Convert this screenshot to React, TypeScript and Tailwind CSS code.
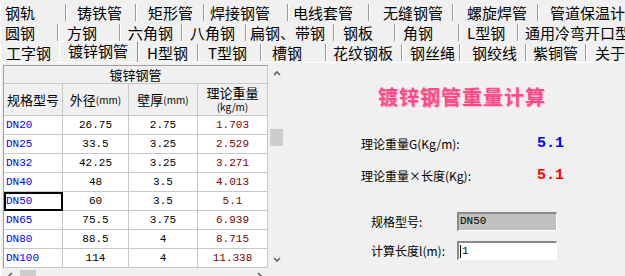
import React from 'react';

type Tab = { t: string; c: string; sel?: boolean; last?: boolean };

const row1: Tab[] = [
  { t: '钢轨', c: 'w-[66px] pl-[4px]' },
  { t: '铸铁管', c: 'w-[70px] pl-[10px]' },
  { t: '矩形管', c: 'w-[68px] pl-[11px]' },
  { t: '焊接钢管', c: 'w-[84px] pl-[5px]' },
  { t: '电线套管', c: 'w-[81px] pl-[4px]' },
  { t: '无缝钢管', c: 'w-[84px] pl-[13px]' },
  { t: '螺旋焊管', c: 'w-[85px] pl-[13px]' },
  { t: '管道保温计算', c: 'w-[120px] pl-[11px]' },
];

const row2: Tab[] = [
  { t: '圆钢', c: 'w-[58px] pl-[4px]' },
  { t: '方钢', c: 'w-[62px] pl-[8px]' },
  { t: '六角钢', c: 'w-[62px] pl-[7px]' },
  { t: '八角钢', c: 'w-[64px] pl-[7px]' },
  { t: '扁钢、带钢', c: 'w-[88px] pl-[3px]' },
  { t: '钢板', c: 'w-[61px] pl-[8px]' },
  { t: '角钢', c: 'w-[64px] pl-[7px]' },
  { t: 'L型钢', c: 'w-[59px] pl-[7px]' },
  { t: '通用冷弯开口型钢', c: 'w-[140px] pl-[6px]' },
];

const row3: Tab[] = [
  { t: '工字钢', c: 'w-[59px] pl-[5px]', last: true },
  { t: '镀锌钢管', c: 'w-[79px] pl-[8px]', sel: true },
  { t: 'H型钢', c: 'w-[60px] pl-[8px]' },
  { t: 'T型钢', c: 'w-[63px] pl-[9px]' },
  { t: '槽钢', c: 'w-[65px] pl-[10px]' },
  { t: '花纹钢板', c: 'w-[76px] pl-[6px]' },
  { t: '钢丝绳', c: 'w-[58px] pl-[7px]' },
  { t: '钢绞线', c: 'w-[66px] pl-[11px]' },
  { t: '紫铜管', c: 'w-[60px] pl-[6px]' },
  { t: '关于', c: 'w-[60px] pl-[8px]' },
];

const pipes = [
  ['DN20', '26.75', '2.75', '1.703'],
  ['DN25', '33.5', '3.25', '2.529'],
  ['DN32', '42.25', '3.25', '3.271'],
  ['DN40', '48', '3.5', '4.013'],
  ['DN50', '60', '3.5', '5.1'],
  ['DN65', '75.5', '3.75', '6.939'],
  ['DN80', '88.5', '4', '8.715'],
  ['DN100', '114', '4', '11.338'],
];

const TabRow = ({ tabs }: { tabs: Tab[] }) => (
  <div className="flex h-[20px] items-center whitespace-nowrap">
    {tabs.map((tab) =>
      tab.sel ? (
        <div
          key={tab.t}
          className={`relative z-10 -mb-px flex-none self-end h-[22px] bg-[#f0f0f0] border-t border-l border-r border-white border-r-[#8c8c8c] leading-[18px] ${tab.c}`}
        >
          {tab.t}
        </div>
      ) : (
        <div
          key={tab.t}
          className={`flex-none h-[17px] leading-[17px] border-l border-white ${
            tab.last ? '' : 'border-r border-r-[#9a9a9a]'
          } ${tab.c}`}
        >
          {tab.t}
        </div>
      )
    )}
  </div>
);

const Arrow = ({ dir }: { dir: 'up' | 'down' | 'left' | 'right' }) => {
  const pts = {
    up: '1,5 4,2 7,5',
    down: '1,2 4,5 7,2',
    left: '5,1 2,4 5,7',
    right: '2,1 5,4 2,7',
  }[dir];
  return (
    <svg width="8" height="8" viewBox="0 0 8 8">
      <polyline points={pts} fill="none" stroke="#606060" strokeWidth="1.6" />
    </svg>
  );
};

const mono = "font-['Liberation_Mono','Noto_Sans_CJK_SC',monospace]";

export default function App() {
  return (
    <div className="w-[625px] h-[276px] overflow-hidden bg-[#f0f0f0] text-black font-['Noto_Sans_CJK_SC',sans-serif]">
      {/* tab strip */}
      <div className="pt-[2px] text-[15px] overflow-hidden">
        <TabRow tabs={row1} />
        <TabRow tabs={row2} />
        <TabRow tabs={row3} />
      </div>

      {/* tab page */}
      <div className="flex h-[214px] border-t border-l border-white">
        {/* table + scrollbars */}
        <div className="flex flex-col pl-[2px] pt-[2px]">
          <div className="flex">
            <div className="w-[265px] border-t border-l border-[#a0a0a0] text-[13px]">
              <div className="h-[18px] leading-[17px] text-center border-r border-b border-[#c8c8c8]">
                镀锌钢管
              </div>
              <div className="grid grid-cols-[59px_66px_69px_70px] h-[32px]">
                <div className="flex items-center pl-[3px] border-r border-b border-[#c8c8c8]">规格型号</div>
                <div className="flex items-center justify-center border-r border-b border-[#c8c8c8]">
                  外径<span className="text-[10px]">(mm)</span>
                </div>
                <div className="flex items-center justify-center border-r border-b border-[#c8c8c8]">
                  壁厚<span className="text-[10px]">(mm)</span>
                </div>
                <div className="flex flex-col items-center justify-center leading-[14px] border-r border-b border-[#c8c8c8]">
                  <span>理论重量</span>
                  <span className="text-[10px] leading-[13px]">(kg/m)</span>
                </div>
              </div>
              {pipes.map((p) => (
                <div
                  key={p[0]}
                  className={`grid grid-cols-[59px_66px_69px_70px] h-[19px] bg-white text-[11px] leading-[18px] ${mono}`}
                >
                  <div
                    className={`pl-[2px] text-[#0000ff] border-r border-b border-[#c8c8c8] ${
                      p[0] === 'DN50' ? 'outline-2 outline-black outline-offset-[-2px]' : ''
                    }`}
                  >
                    {p[0]}
                  </div>
                  <div className="text-center border-r border-b border-[#c8c8c8]">{p[1]}</div>
                  <div className="text-center border-r border-b border-[#c8c8c8]">{p[2]}</div>
                  <div className="text-center text-[#800000] border-r border-b border-[#c8c8c8]">{p[3]}</div>
                </div>
              ))}
            </div>
            {/* vertical scrollbar */}
            <div className="w-[17px] h-[203px] flex flex-col items-center bg-[#f0f0f0]">
              <div className="h-[17px] flex items-center justify-center">
                <Arrow dir="up" />
              </div>
              <div className="flex-1 w-full flex flex-col items-center">
                <div className="mt-[47px] w-[13px] h-[17px] bg-[#cdcdcd]" />
              </div>
              <div className="h-[17px] flex items-center justify-center">
                <Arrow dir="down" />
              </div>
            </div>
          </div>
          {/* horizontal scrollbar */}
          <div className="w-[265px] h-[17px] flex items-center">
            <div className="w-[16px] flex justify-center">
              <Arrow dir="left" />
            </div>
            <div className="flex-1 h-full">
              <div className="mt-[2px] ml-[1px] w-[16px] h-[13px] bg-[#cdcdcd]" />
            </div>
            <div className="w-[16px] flex justify-center">
              <Arrow dir="right" />
            </div>
          </div>
        </div>

        {/* calculator */}
        <div className="flex-1 flex flex-col text-[12px]">
          <div className="mt-[22px] ml-[93px] h-[24px] leading-[24px] text-[20px] font-bold tracking-[1px] text-[#ff4a86] [text-shadow:1px_1px_0_#ffb8cf] whitespace-nowrap">
            镀锌钢管重量计算
          </div>
          <div className="mt-[27px] ml-[76px] flex items-center h-[16px]">
            <span className="w-[176px]">理论重量G(Kg/m):</span>
            <span className={`text-[15px] font-bold text-[#0000ff] ${mono}`}>5.1</span>
          </div>
          <div className="mt-[16px] ml-[76px] flex items-center h-[16px]">
            <span className="w-[176px]">理论重量×长度(Kg):</span>
            <span className={`text-[15px] font-bold text-[#ff0000] ${mono}`}>5.1</span>
          </div>
          <div className="mt-[28px] ml-[86px] flex items-center h-[19px]">
            <span className="w-[86px]">规格型号:</span>
            <div
              className={`w-[100px] h-[19px] bg-[#c0c0c0] border-t-2 border-l-2 border-[#8a8a8a] border-b border-r border-b-white border-r-white text-[11px] leading-[15px] pl-px ${mono}`}
            >
              DN50
            </div>
          </div>
          <div className="mt-[10px] ml-[86px] flex items-center h-[19px]">
            <span className="w-[86px]">计算长度l(m):</span>
            <div
              className={`w-[100px] h-[19px] bg-white border-t-2 border-l-2 border-[#8a8a8a] border-b border-r border-b-white border-r-white text-[11px] leading-[15px] flex items-center ${mono}`}
            >
              <span className="w-px h-[13px] bg-black ml-px mr-px" />
              1
            </div>
          </div>
        </div>
      </div>
    </div>
  );
}
